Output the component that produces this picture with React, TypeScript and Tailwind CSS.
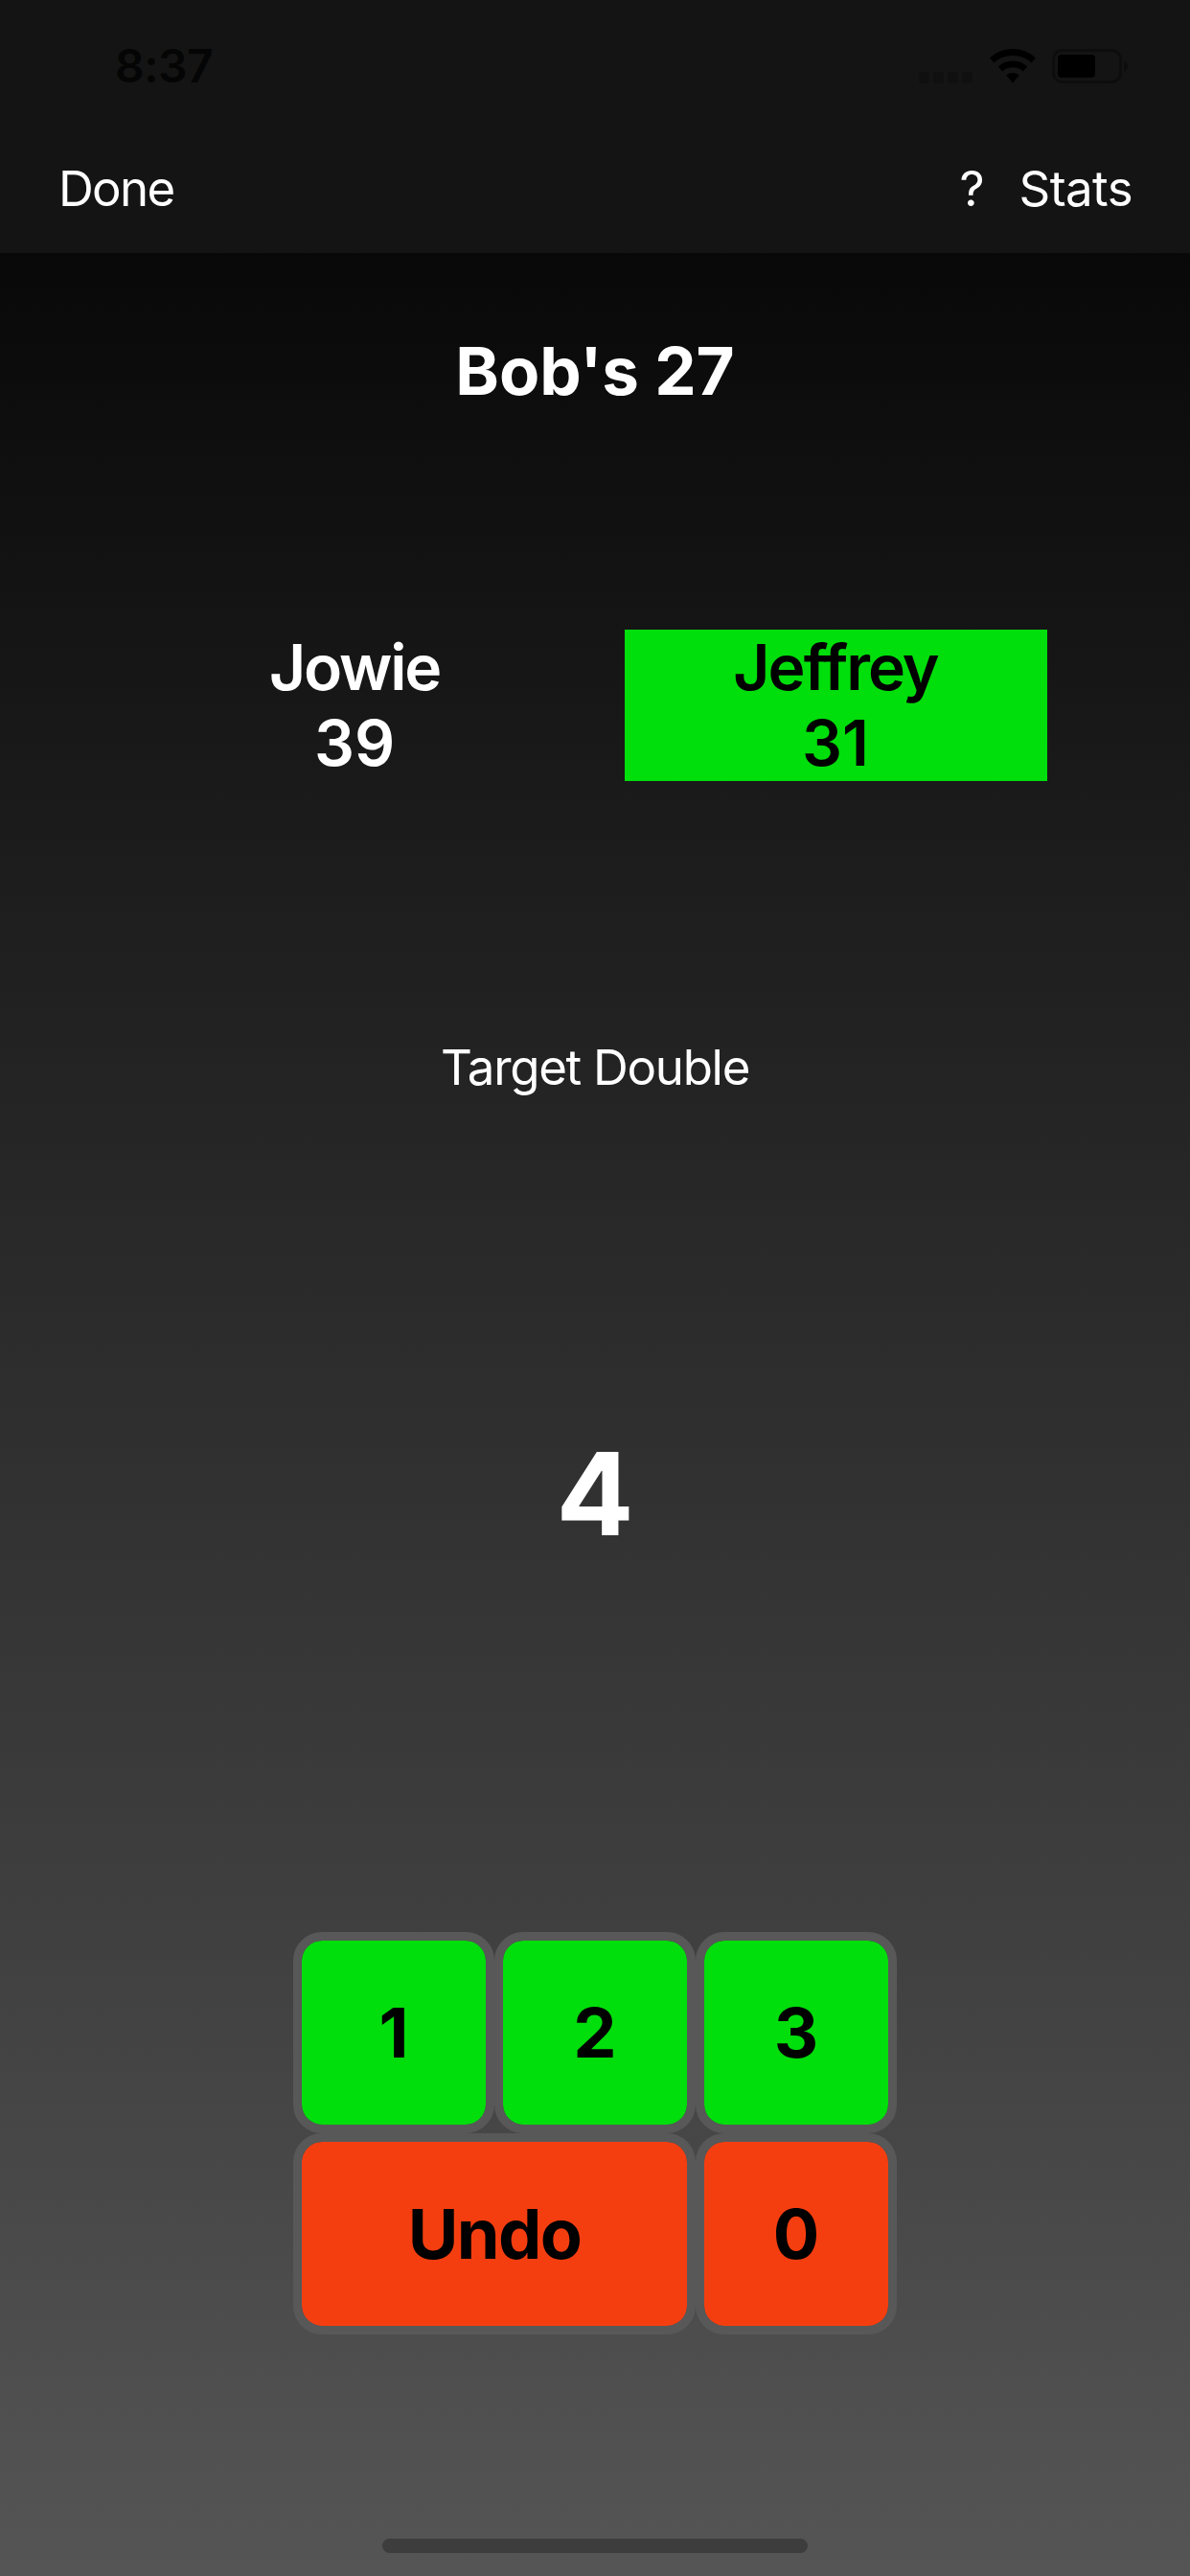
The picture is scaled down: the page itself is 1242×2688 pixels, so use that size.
export default function App() {
  const font = { fontFamily: "Inter, 'Liberation Sans', sans-serif" };
  const key = "h-[210px] rounded-[30px] border-[9px] border-[#585858] bg-clip-padding flex items-center justify-center text-[72px] font-bold text-black leading-none";
  return (
    <div style={font} className="w-[1242px] h-[2688px] flex flex-col bg-linear-to-b/srgb from-black to-[#555555] text-white overflow-hidden">
      <header className="h-[264px] shrink-0 bg-[#141414] flex flex-col">
        <div className="h-[132px] shrink-0 flex items-center justify-between pt-[6px] pl-[120px] pr-[65px]">
          <span className="text-[48px] font-semibold text-[#050505] leading-none tracking-[-0.5px]">8:37</span>
          <div className="flex items-center">
            <svg width="56" height="36" viewBox="0 0 56 36" className="mr-[17px]">
              <rect x="0" y="24" width="11" height="12" rx="3" fill="#101010" />
              <rect x="15" y="24" width="11" height="12" rx="3" fill="#101010" />
              <rect x="30" y="24" width="11" height="12" rx="3" fill="#101010" />
              <rect x="45" y="24" width="11" height="12" rx="3" fill="#101010" />
            </svg>
            <svg width="50" height="36" viewBox="0 0 50 36" className="mr-[16px]">
              <path d="M25 0C15.500 0 7.200 3.600 1 9.500L5.500 14.500C10.500 9.800 17.300 7 25 7S39.500 9.800 44.500 14.500L49 9.500C42.800 3.600 34.500 0 25 0Z" fill="#000" />
              <path d="M25 12.500C19 12.500 13.700 14.700 9.800 18.500L14.300 23.400C17.100 20.800 20.800 19.300 25 19.300S32.900 20.800 35.700 23.400L40.200 18.500C36.300 14.700 31 12.500 25 12.500Z" fill="#000" />
              <path d="M25 25C22.400 25 20 26 18.300 27.600L25 35.500L31.700 27.600C30 26 27.600 25 25 25Z" fill="#000" />
            </svg>
            <svg width="79" height="36" viewBox="0 0 79 36">
              <rect x="1.500" y="1.500" width="70" height="33" rx="9" fill="none" stroke="#0d0d0d" strokeWidth="3" />
              <rect x="6" y="6" width="39" height="24" rx="4" fill="#000" />
              <path d="M75 12C77.500 13 79 15.500 79 18S77.500 23 75 24Z" fill="#0d0d0d" />
            </svg>
          </div>
        </div>
        <nav className="flex-1 flex items-start justify-between pt-[34px] pl-[61px] pr-[60px] text-[51px] leading-[62px]">
          <span className="tracking-[-1.7px]">Done</span>
          <div className="flex gap-[36px]">
            <span>?</span>
            <span className="tracking-[-0.6px]">Stats</span>
          </div>
        </nav>
      </header>
      <main className="flex-1 flex flex-col items-center">
        <h1 className="mt-[81px] text-[69px] font-bold leading-[84px]">Bob's 27</h1>
        <div className="mt-[228px] flex gap-[61px] text-[66px] font-semibold leading-[79px] text-center">
          <div className="w-[441px]">
            <div className="tracking-[-2.2px]">Jowie</div>
            <div>39</div>
          </div>
          <div className="w-[441px] bg-[#00de0b] text-black">
            <div className="tracking-[-2px]">Jeffrey</div>
            <div>31</div>
          </div>
        </div>
        <p className="mt-[268px] text-[51px] leading-[62px] tracking-[-1.3px]">Target Double</p>
        <div className="mt-[341px] text-[120px] font-bold leading-[146px]">4</div>
        <div className="mt-[384px] grid grid-cols-[210px_210px_210px] grid-rows-[210px_210px]">
          <div className={`${key} bg-[#00de0b]`}>1</div>
          <div className={`${key} bg-[#00de0b]`}>2</div>
          <div className={`${key} bg-[#00de0b]`}>3</div>
          <div className={`${key} col-span-2 bg-[#f53e10] tracking-[-1.6px]`}>Undo</div>
          <div className={`${key} bg-[#f53e10]`}>0</div>
        </div>
        <div className="mt-auto mb-[24px] w-[444px] h-[15px] rounded-full bg-[#3d3d3d]" />
      </main>
    </div>
  );
}
